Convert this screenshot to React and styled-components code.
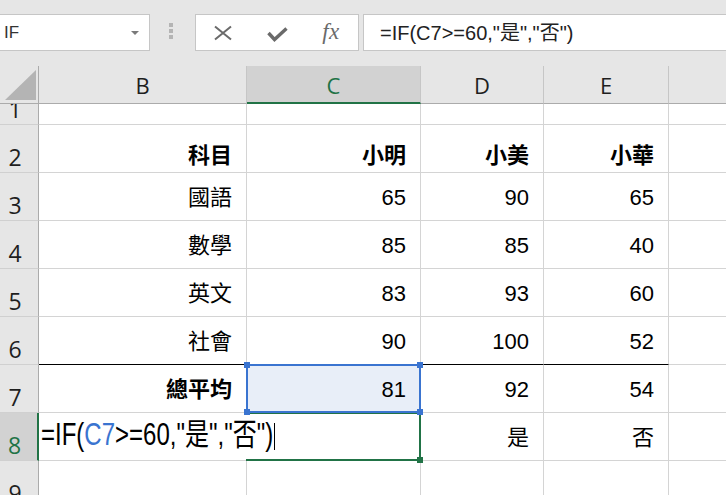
import React from "react";
import styled, { createGlobalStyle } from "styled-components";

const GlobalStyle = createGlobalStyle`
  html, body { margin: 0; padding: 0; background: #fff; }
  * { box-sizing: border-box; }
`;

const GREEN = "#217346";
const BLUE = "#3a74d0";
const GRID = "#d4d4d4";

const Window = styled.div`
  width: 726px;
  height: 495px;
  overflow: hidden;
  background: #e6e6e6;
  font-family: "Liberation Sans", "Noto Sans CJK TC", sans-serif;
`;

const TopBar = styled.div`
  height: 66px;
  display: flex;
  align-items: flex-start;
  padding-top: 14px;
  background: #e6e6e6;
`;

const NameBox = styled.div`
  margin-left: -1px;
  width: 151px;
  height: 37px;
  flex: none;
  background: #fff;
  border: 1px solid #c6c6c6;
  display: flex;
  align-items: center;
  justify-content: space-between;
  padding: 0 10px 0 4px;
  font: 400 17px/1 "Liberation Sans", sans-serif;
  color: #333;
`;

const Grip = styled.div`
  margin: 9px 0 0 19px;
  display: flex;
  flex-direction: column;
  gap: 2px;
  flex: none;
`;

const Dot = styled.span`
  width: 4px;
  height: 4px;
  background: #b4b4b4;
`;

const FxGroup = styled.div`
  margin-left: 22px;
  width: 164px;
  height: 37px;
  flex: none;
  background: #fff;
  border: 1px solid #c6c6c6;
  display: grid;
  grid-template-columns: repeat(3, 54px);
  align-items: center;
  justify-items: center;
  padding-left: 0;
`;

const IconSlot = styled.span`
  display: flex;
  align-items: center;
  justify-content: center;
  margin-top: ${(p) => p.$dy || 0}px;
`;

const FxLabel = styled.span`
  font: italic 400 23px/1 "Liberation Serif", serif;
  color: #6a6a6a;
  letter-spacing: 0.5px;
  margin-top: -2px;
`;

const FormulaInput = styled.div`
  margin-left: 4px;
  margin-right: -2px;
  flex: 1;
  height: 37px;
  background: #fff;
  border: 1px solid #c6c6c6;
  display: flex;
  align-items: center;
  padding-left: 16px;
  font: 400 20px/1 "Liberation Sans", "Noto Sans CJK TC", sans-serif;
  color: #222;
  white-space: nowrap;
`;

const Sheet = styled.div`
  display: grid;
  grid-template-columns: 39px 208px 174px 123px 125px 125px;
  grid-template-rows: 38px 21px repeat(8, 48px);
`;

const Corner = styled.div`
  background: #e6e6e6;
  border-right: 1px solid #ababab;
  border-bottom: 1px solid #ababab;
  display: flex;
  align-items: flex-end;
  justify-content: flex-end;
  padding: 0 2px 3px 0;
`;

const Triangle = styled.div`
  width: 31px;
  height: 30px;
  background: #b4b4b4;
  clip-path: polygon(100% 0, 100% 100%, 0 100%);
`;

const ColHead = styled.div`
  display: flex;
  align-items: center;
  justify-content: center;
  padding-top: ${(p) => (p.$active ? 1 : 0)}px;
  background: ${(p) => (p.$active ? "#d2d2d2" : "#e6e6e6")};
  color: ${(p) => (p.$active ? GREEN : "#1e1e1e")};
  border-right: 1px solid #c6c6c6;
  border-bottom: ${(p) => (p.$active ? `2px solid ${GREEN}` : "1px solid #ababab")};
  font: 400 22px/1 "Open Sans", sans-serif;
`;

const RowHead = styled.div`
  display: flex;
  align-items: flex-end;
  justify-content: center;
  padding: 0 8px 3px 0;
  overflow: hidden;
  background: ${(p) => (p.$active ? "#d2d2d2" : "#e6e6e6")};
  color: ${(p) => (p.$active ? GREEN : "#1e1e1e")};
  border-right: ${(p) => (p.$active ? `2px solid ${GREEN}` : "1px solid #ababab")};
  border-bottom: 1px solid #d0d0d0;
  font: 400 23px/1 "Open Sans", sans-serif;
`;

const Cell = styled.div`
  position: relative;
  display: flex;
  align-items: flex-end;
  justify-content: flex-end;
  padding: 0 14px ${(p) => (p.$head ? 5 : 11)}px 0;
  background: ${(p) => (p.$fill ? "#e8eef8" : "#fff")};
  border-right: 1px solid ${GRID};
  border-bottom: 1px solid ${(p) => (p.$rule ? "#000" : GRID)};
  font: ${(p) => (p.$bold ? 700 : 400)} 22px/1 "Liberation Sans", "Noto Sans CJK TC", sans-serif;
  color: #000;
  white-space: nowrap;
`;

const EditorCell = styled.div`
  grid-column: span 2;
  position: relative;
  display: flex;
  align-items: flex-end;
  padding: 0 0 10px 2px;
  background: #fff;
  border-bottom: 1px solid ${GRID};
  font: 400 24px/1 "Liberation Sans", "Noto Sans CJK TC", sans-serif;
  color: #000;
  white-space: nowrap;
`;

const EditorLine = styled.div`
  line-height: 1;
`;

const Tall = styled.span`
  display: inline-block;
  transform: scaleY(1.28);
  transform-origin: 0 20px;
`;

const Ref = styled.span`
  color: ${BLUE};
`;

const Caret = styled.span`
  display: inline-block;
  width: 1px;
  height: 27px;
  margin-left: 1px;
  background: #000;
  vertical-align: -5px;
`;

const RangeBox = styled.div`
  position: absolute;
  left: -1px;
  top: -1px;
  width: 175px;
  height: 49px;
  border: 2px solid ${BLUE};
  z-index: 3;
`;

const ActiveFrame = styled.div`
  position: absolute;
  left: 207px;
  top: -1px;
  width: 175px;
  height: 49px;
  border: 2px solid ${GREEN};
  border-left: 0;
  z-index: 2;
`;

const Handle = styled.span`
  position: absolute;
  width: 6px;
  height: 6px;
  background: ${(p) => p.$color};
  ${(p) => (p.$v === "t" ? "top: -4px;" : "bottom: -4px;")}
  ${(p) => (p.$h === "l" ? "left: -4px;" : "right: -4px;")}
`;

const COLS = ["B", "C", "D", "E", "F"];

const ROWS = [
  { n: 1, cells: ["", "", "", "", ""] },
  { n: 2, head: true, cells: ["科目", "小明", "小美", "小華", ""] },
  { n: 3, cells: ["國語", "65", "90", "65", ""] },
  { n: 4, cells: ["數學", "85", "85", "40", ""] },
  { n: 5, cells: ["英文", "83", "93", "60", ""] },
  { n: 6, rule: true, cells: ["社會", "90", "100", "52", ""] },
  { n: 7, cells: ["總平均", "81", "92", "54", ""] },
];

const XIcon = () => (
  <svg width="20" height="16" viewBox="0 0 20 16">
    <path d="M2 1.5 L18 14.5 M18 1.5 L2 14.5" stroke="#6a6a6a" strokeWidth="2" fill="none" />
  </svg>
);

const CheckIcon = () => (
  <svg width="21" height="15" viewBox="0 0 21 15">
    <path d="M1.5 6 L7.5 12.5 L19.5 1.5" stroke="#6a6a6a" strokeWidth="3.4" fill="none" strokeLinejoin="miter" />
  </svg>
);

const DropArrow = () => (
  <svg width="8" height="4" viewBox="0 0 8 4">
    <polygon points="0,0 8,0 4,4" fill="#7a7a7a" />
  </svg>
);

export default function App() {
  return (
    <>
      <GlobalStyle />
      <Window>
        <TopBar>
          <NameBox>
            <span>IF</span>
            <DropArrow />
          </NameBox>
          <Grip>
            <Dot />
            <Dot />
            <Dot />
          </Grip>
          <FxGroup>
            <IconSlot>
              <XIcon />
            </IconSlot>
            <IconSlot $dy={3}>
              <CheckIcon />
            </IconSlot>
            <FxLabel>fx</FxLabel>
          </FxGroup>
          <FormulaInput>=IF(C7&gt;=60,"是","否")</FormulaInput>
        </TopBar>
        <Sheet>
          <Corner>
            <Triangle />
          </Corner>
          {COLS.map((c) => (
            <ColHead key={c} $active={c === "C"}>
              {c}
            </ColHead>
          ))}
          {ROWS.map((r) => (
            <React.Fragment key={r.n}>
              <RowHead>{r.n}</RowHead>
              {r.cells.map((v, i) => {
                const selected = r.n === 7 && i === 1;
                return (
                  <Cell
                    key={i}
                    $head={r.head}
                    $bold={r.head || (r.n === 7 && i === 0)}
                    $rule={r.rule && i < 4}
                    $fill={selected}
                  >
                    {v}
                    {selected && (
                      <RangeBox>
                        <Handle $color={BLUE} $v="t" $h="l" />
                        <Handle $color={BLUE} $v="t" $h="r" />
                        <Handle $color={BLUE} $v="b" $h="l" />
                        <Handle $color={BLUE} $v="b" $h="r" />
                      </RangeBox>
                    )}
                  </Cell>
                );
              })}
            </React.Fragment>
          ))}
          <RowHead $active>8</RowHead>
          <EditorCell>
            <EditorLine>
              <Tall>
                =IF(<Ref>C7</Ref>&gt;=60,"是","否")
              </Tall>
              <Caret />
            </EditorLine>
            <ActiveFrame>
              <Handle $color={GREEN} $v="b" $h="r" />
            </ActiveFrame>
          </EditorCell>
          <Cell>是</Cell>
          <Cell>否</Cell>
          <Cell />
          <RowHead>9</RowHead>
          <Cell />
          <Cell />
          <Cell />
          <Cell />
          <Cell />
        </Sheet>
      </Window>
    </>
  );
}
